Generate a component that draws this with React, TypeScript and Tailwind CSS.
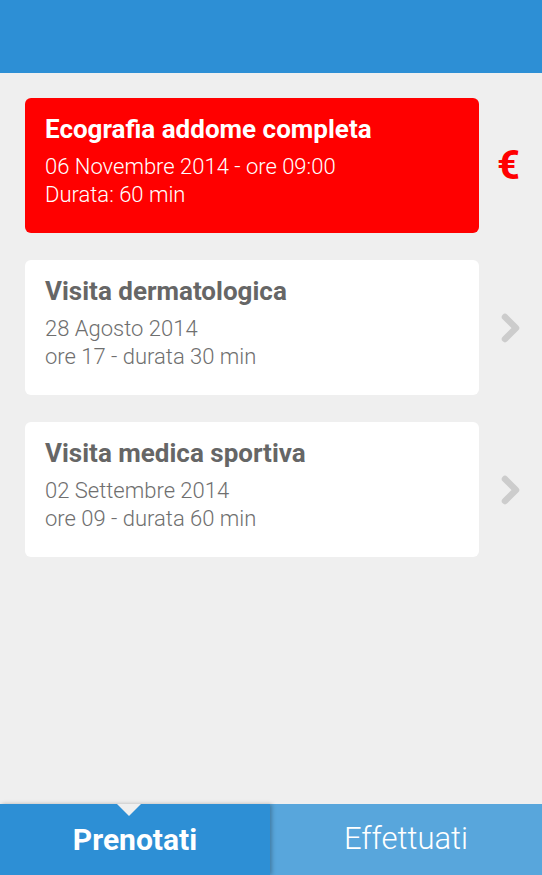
import { FC } from 'react';

type Booking = {
  title: string;
  line1: string;
  line2: string;
  unpaid?: boolean;
};

const bookings: Booking[] = [
  { title: 'Ecografia addome completa', line1: '06 Novembre 2014 - ore 09:00', line2: 'Durata: 60 min', unpaid: true },
  { title: 'Visita dermatologica', line1: '28 Agosto 2014', line2: 'ore 17 - durata 30 min' },
  { title: 'Visita medica sportiva', line1: '02 Settembre 2014', line2: 'ore 09 - durata 60 min' },
];

const Chevron = () => (
  <svg width="24" height="32" viewBox="0 0 24 32" fill="none">
    <path d="M6 5 L17 16 L6 27" stroke="#cccccc" strokeWidth="6.5" strokeLinecap="round" strokeLinejoin="round" />
  </svg>
);

const BookingRow: FC<{ item: Booking }> = ({ item }) => (
  <div className="flex items-center">
    <div
      className={
        item.unpaid
          ? 'w-[454px] h-[135px] rounded-[6px] bg-[#ff0000] text-white px-5 pt-[15px]'
          : 'w-[454px] h-[135px] rounded-[6px] bg-white text-[#666666] px-5 pt-[15px]'
      }
    >
      <div className="text-[26px] font-bold leading-[32px]">{item.title}</div>
      <div className={item.unpaid ? 'mt-[8px] text-[22px] font-light leading-[28px]' : 'mt-[8px] text-[22px] font-light leading-[28px] text-[#6f6f6f]'}>
        <div>{item.line1}</div>
        <div>{item.line2}</div>
      </div>
    </div>
    <div className="flex-1 flex justify-center">
      {item.unpaid ? (
        <span className="text-[#ff0000] text-[40px] font-bold leading-none pr-[4px]">€</span>
      ) : (
        <Chevron />
      )}
    </div>
  </div>
);

const App: FC = () => {
  return (
    <div className="w-[542px] h-[875px] bg-[#efefef] flex flex-col font-['Roboto',sans-serif]">
      <div className="h-[73px] bg-[#2d8fd5]" />
      <div className="flex-1 flex flex-col gap-[27px] pl-[25px] pt-[25px]">
        {bookings.map((item, i) => (
          <BookingRow key={i} item={item} />
        ))}
      </div>
      <div className="relative h-[71px] flex">
        <div className="w-[270px] bg-[#2d8fd5] flex items-center justify-center text-white text-[30px] font-bold z-10 shadow-[2px_0_4px_rgba(0,0,0,0.25)]">
          Prenotati
        </div>
        <div className="flex-1 bg-[#58a6dc] flex items-center justify-center text-white text-[31px] font-light">
          Effettuati
        </div>
        <div className="absolute left-[117px] top-0 z-20 w-0 h-0 border-l-[12px] border-r-[12px] border-t-[12px] border-l-transparent border-r-transparent border-t-[#efefef]" />
      </div>
    </div>
  );
};

export default App;
